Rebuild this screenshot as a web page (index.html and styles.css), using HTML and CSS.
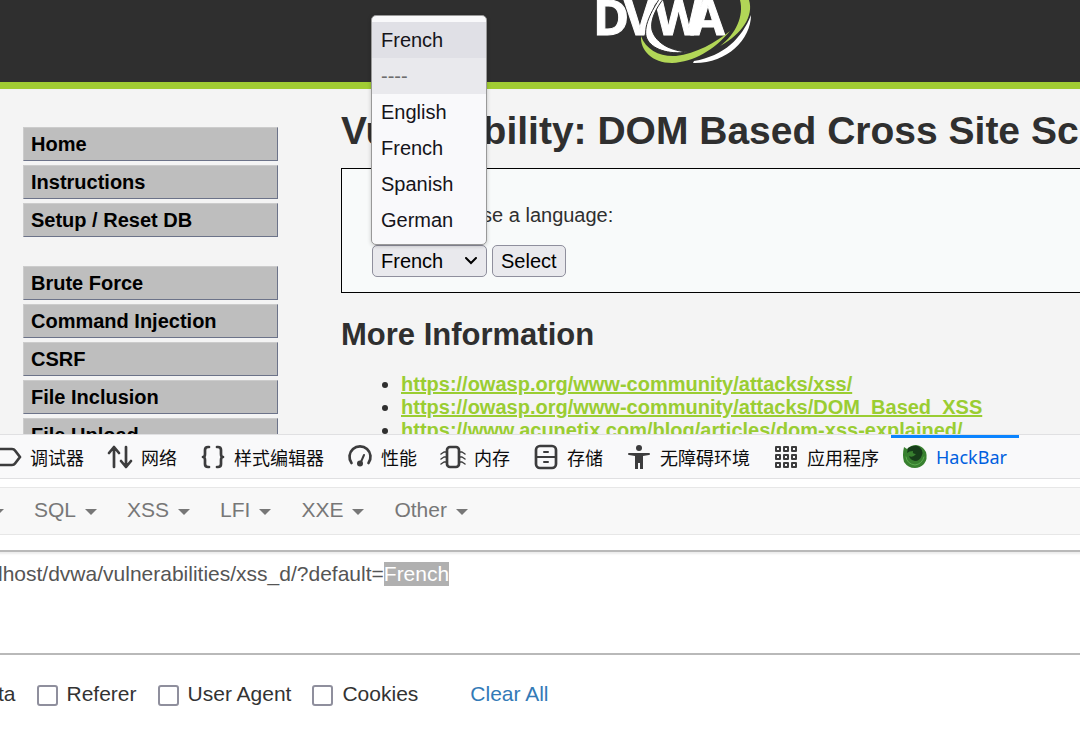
FILE: index.html
```html
<!DOCTYPE html>
<html lang="en">
<head>
    <meta charset="utf-8">
    <title>Vulnerability: DOM Based Cross Site Scripting (XSS)</title>
    <link rel="stylesheet" href="styles.css">
</head>
<body>
    <div class="page">
        <header class="page-header">
            <svg class="logo" viewBox="0 0 170 66" width="170" height="66" role="img" aria-label="DVWA">
                <g class="logo-text">
                    <text x="3" y="35">D</text>
                    <text x="34" y="35">V</text>
                    <text x="65" y="35">W</text>
                    <text x="101" y="35">A</text>
                </g>
                <path fill="#fff" stroke="#2f2f2f" d="M74 -2 C66 8 60 20 62 30 C66 44 82 51 98 52 C78 55 62 49 57 39 C52 28 62 10 70 -2 Z"/>
                <path fill="#b2d657" d="M51 36 C56 50 70 57 86 56 C106 54 126 42 140 31 C124 50 104 62 82 63 C62 63 50 50 51 36 Z"/>
                <path fill="#b2d657" d="M130 46 C146 34 154 16 150 0 L159 0 C164 16 152 34 130 46 Z"/>
                <path fill="#fff" d="M161 15 C161 40 136 64 103 63 L104 61 C134 56 152 38 161 15 Z"/>
            </svg>
        </header>

        <div class="page-body">
            <nav class="menu">
                <ul>
                    <li><a href="#">Home</a></li>
                    <li><a href="#">Instructions</a></li>
                    <li><a href="#">Setup / Reset DB</a></li>
                </ul>
                <ul>
                    <li><a href="#">Brute Force</a></li>
                    <li><a href="#">Command Injection</a></li>
                    <li><a href="#">CSRF</a></li>
                    <li><a href="#">File Inclusion</a></li>
                    <li><a href="#">File Upload</a></li>
                </ul>
            </nav>

            <main class="content">
                <h1>Vulnerability: DOM Based Cross Site Sc</h1>
                <form class="vulnerable">
                    <label for="lang">Please choose a language:</label>
                    <div class="field">
                        <select id="lang">
                            <option>French</option>
                        </select>
                        <button type="button">Select</button>
                        <ul class="dropdown">
                            <li class="current">French</li>
                            <li class="divider">----</li>
                            <li>English</li>
                            <li>French</li>
                            <li>Spanish</li>
                            <li>German</li>
                        </ul>
                    </div>
                </form>

                <h2>More Information</h2>
                <ul class="links">
                    <li><a href="#">https://owasp.org/www-community/attacks/xss/</a></li>
                    <li><a href="#">https://owasp.org/www-community/attacks/DOM_Based_XSS</a></li>
                    <li><a href="#">https://www.acunetix.com/blog/articles/dom-xss-explained/</a></li>
                </ul>
            </main>
        </div>
    </div>

    <div class="devtools">
        <div class="tabs">
            <button class="tab">
                <svg viewBox="0 0 24 24"><path d="M-4 4 H15 Q17 4 18 5.500 L23 12 L18 18.500 Q17 20 15 20 H-4"/></svg>
                调试器
            </button>
            <button class="tab">
                <svg viewBox="0 0 24 24"><path d="M6 22 V2 M1 8 L6 2 L11 8 M18 2 V22 M13 16 L18 22 L23 16"/></svg>
                网络
            </button>
            <button class="tab">
                <svg viewBox="0 0 24 24"><path d="M8 2 H7 Q4 2 4 5 V9 Q4 12 2 12 Q4 12 4 15 V19 Q4 22 7 22 H8 M16 2 H17 Q20 2 20 5 V9 Q20 12 22 12 Q20 12 20 15 V19 Q20 22 17 22 H16"/></svg>
                样式编辑器
            </button>
            <button class="tab">
                <svg viewBox="0 0 24 24"><path d="M3.500 18 A10.500 10.500 0 1 1 20.500 18"/><path class="thin" d="M16 10 L12.500 18"/><circle class="solid" cx="12" cy="18.500" r="3"/></svg>
                性能
            </button>
            <button class="tab">
                <svg viewBox="0 0 24 24"><rect x="6" y="2" width="12" height="20" rx="3"/><path class="fine" d="M6 7 H3 L0 9 M6 12 H3 L0 14 M6 17 H3 L0 19 M18 7 H21 L24 9 M18 12 H21 L24 14 M18 17 H21 L24 19"/></svg>
                内存
            </button>
            <button class="tab">
                <svg viewBox="0 0 24 24"><rect x="2" y="1" width="20" height="22" rx="4"/><path class="thin" d="M2 12 H22 M10 7 H14 M10 17 H14"/></svg>
                存储
            </button>
            <button class="tab">
                <svg viewBox="0 0 24 24"><g class="solid"><circle cx="12" cy="3" r="3"/><path d="M2 8 H22 Q23 8 23 9 Q23 10 22 10 L16 11 V24 H13 V18 H11 V24 H8 V11 L2 10 Q1 10 1 9 Q1 8 2 8 Z"/></g></svg>
                无障碍环境
            </button>
            <button class="tab">
                <svg viewBox="0 0 24 24"><path class="thin" d="M2 2 h4 v4 h-4 Z M10 2 h4 v4 h-4 Z M18 2 h4 v4 h-4 Z M2 10 h4 v4 h-4 Z M10 10 h4 v4 h-4 Z M18 10 h4 v4 h-4 Z M2 18 h4 v4 h-4 Z M10 18 h4 v4 h-4 Z M18 18 h4 v4 h-4 Z"/></svg>
                应用程序
            </button>
            <button class="tab active">
                <svg viewBox="0 0 24 24"><path fill="#38802f" stroke="none" d="M1 2 L4 4 Q8 0 13 0 Q20 1 23 7 Q25 14 21 19 Q17 23 12 23 Q5 23 1 17 Q-1 10 1 2 Z"/><path fill="#173d1a" stroke="none" d="M5 3 Q10 0 15 1 Q21 5 19 10 Q17 16 12 16 Q7 15 6 11 Q10 13 13 9 Q9 9 10 6 Q6 6 4 8 Z"/><path fill="none" stroke="#5cab4f" stroke-width="1" d="M3 12 Q4 19 12 20 Q19 19 21 12"/></svg>
                HackBar
            </button>
        </div>

        <div class="hackbar-menu">
            <button class="caret-only" aria-label="More"><i class="caret"></i></button>
            <button>SQL <i class="caret"></i></button>
            <button>XSS <i class="caret"></i></button>
            <button>LFI <i class="caret"></i></button>
            <button>XXE <i class="caret"></i></button>
            <button>Other <i class="caret"></i></button>
        </div>

        <textarea id="url" class="url-field" aria-label="URL" spellcheck="false">lhost/dvwa/vulnerabilities/xss_d/?default=French</textarea>

        <div class="options">
            <span>ta</span>
            <label><input type="checkbox"> Referer</label>
            <label><input type="checkbox"> User Agent</label>
            <label><input type="checkbox"> Cookies</label>
            <a href="#">Clear All</a>
        </div>
    </div>

    <script>
        const url = document.getElementById('url');
        url.focus();
        url.setSelectionRange(url.value.indexOf('=') + 1, url.value.length);
    </script>
</body>
</html>
```
FILE: styles.css
```css
* {
    box-sizing: border-box;
}

body {
    margin: 0;
    height: 100vh;
    display: flex;
    flex-direction: column;
    overflow: hidden;
    font-family: "Liberation Sans", Arial, sans-serif;
    background: #fff;
}

ul {
    list-style: none;
    margin: 0;
    padding: 0;
}

button,
select,
textarea {
    font-family: inherit;
}

/* DVWA page */
.page {
    flex: 1;
    min-height: 0;
    overflow: hidden;
    background: #f4f4f4;
    color: #2f2f2f;
    font-size: 20px;
}

.page-header {
    height: 89px;
    padding-left: 270px;
    background: #2f2f2f;
    border-bottom: 7px solid #a1cc33;
    display: flex;
    justify-content: center;
}

.logo {
    display: block;
    overflow: visible;
}

.logo-text {
    font-family: "Open Sans", sans-serif;
    font-size: 49px;
    font-weight: bold;
    fill: #fff;
    stroke: #fff;
}

.page-body {
    display: flex;
    gap: 63px;
    padding-left: 23px;
}

.menu {
    flex: 0 0 255px;
    display: flex;
    flex-direction: column;
    gap: 29px;
    padding-top: 38px;
}

.menu ul {
    display: flex;
    flex-direction: column;
    gap: 4px;
}

.menu a {
    display: block;
    height: 34px;
    padding-left: 7px;
    line-height: 32px;
    font-weight: bold;
    color: #000;
    background: #bebebe;
    border: 1px solid #ccc;
    border-right-color: #6c7389;
    border-bottom-color: #6c7389;
    text-decoration: none;
}

.content {
    flex: 1;
    min-width: 0;
}

h1 {
    margin: 18px 0 14px;
    font-size: 39px;
    line-height: 47px;
    white-space: nowrap;
}

.vulnerable {
    height: 125px;
    padding: 34px 30px 0;
    background: #f8fafa;
    border: 1px solid #000;
    border-right: 0;
}

.vulnerable label {
    display: block;
    line-height: 24px;
}

.field {
    position: relative;
    display: flex;
    gap: 5px;
    margin-top: 18px;
}

.field select,
.field button {
    height: 32px;
    font-size: 20px;
    color: #000;
    background-color: #e9e9ed;
    border: 1px solid #8f8f9d;
    border-radius: 5px;
}

.field select {
    appearance: none;
    width: 115px;
    padding: 0 8px;
    background-image: url("data:image/svg+xml,%3Csvg xmlns='http://www.w3.org/2000/svg' width='12' height='8' fill='none' stroke='black' stroke-width='2' stroke-linecap='round'%3E%3Cpath d='M1 1l5 5 5-5'/%3E%3C/svg%3E");
    background-repeat: no-repeat;
    background-position: right 9px center;
}

.field button {
    padding: 0 8px;
}

.dropdown {
    position: absolute;
    left: -1px;
    bottom: 32px;
    width: 116px;
    padding: 6px 0;
    color: #15141a;
    background: #f9f9fb;
    border: 1px solid #999;
    border-radius: 5px;
    box-shadow: 0 1px 4px rgba(0, 0, 0, 0.2);
}

.dropdown li {
    padding-left: 9px;
    line-height: 36px;
}

.dropdown .current {
    background: #e0e0e6;
}

.dropdown .divider {
    color: #6d6d6d;
    background: #e9e9ed;
}

h2 {
    margin: 23px 0 20px;
    font-size: 31px;
    line-height: 37px;
}

.links {
    list-style: disc;
    padding-left: 60px;
}

.links li {
    line-height: 23px;
}

.links a {
    color: #9acd32;
    font-weight: bold;
}

/* Developer tools */
.tabs {
    display: flex;
    height: 45px;
    background: #f9f9fa;
    border-top: 1px solid #e0e0e2;
    border-bottom: 1px solid #e0e0e2;
}

.tab {
    display: flex;
    align-items: center;
    gap: 9px;
    padding: 0 12px 3px;
    border: 0;
    border-top: 3px solid transparent;
    background: none;
    color: #0c0c0d;
    font-family: "Noto Sans", "Noto Sans CJK SC", sans-serif;
    font-size: 18px;
    white-space: nowrap;
}

.tab:first-child {
    margin-left: -3px;
    padding-left: 0;
}

.tab svg {
    width: 24px;
    height: 24px;
    overflow: visible;
    fill: none;
    stroke: #3c3c3d;
    stroke-width: 2.7;
    stroke-linecap: round;
    stroke-linejoin: round;
}

.tab .thin {
    stroke-width: 2;
}

.tab .fine {
    stroke-width: 1.5;
}

.tab .solid {
    fill: #3c3c3d;
    stroke: none;
}

.tab.active {
    color: #0060df;
    border-top-color: #0a84ff;
}

.hackbar-menu {
    display: flex;
    gap: 30px;
    height: 48px;
    margin-top: 8px;
    background: #f8f8f8;
    border-top: 1px solid #e7e7e7;
    border-bottom: 1px solid #e7e7e7;
}

.hackbar-menu button {
    display: flex;
    align-items: center;
    gap: 9px;
    padding: 0 0 3px;
    border: 0;
    background: none;
    color: #777;
    font-size: 21px;
}

.caret {
    margin-top: 5px;
    border-top: 6px solid;
    border-left: 6px solid transparent;
    border-right: 6px solid transparent;
}

.hackbar-menu .caret-only {
    width: 4px;
    justify-content: flex-end;
}

.url-field {
    display: block;
    width: 100%;
    height: 105px;
    margin-top: 15px;
    padding: 10px 0;
    border: 0;
    border-top: 2px solid #b9b9b9;
    border-bottom: 2px solid #b9b9b9;
    outline: 0;
    resize: none;
    box-shadow: inset 0 4px 2px -2px rgba(0, 0, 0, 0.08);
    color: #555;
    font-size: 21px;
    line-height: 24px;
    text-indent: -2px;
}

.url-field::selection {
    color: #fff;
    background: #b0b0b0;
}

.options {
    display: flex;
    align-items: center;
    gap: 21px;
    height: 89px;
    margin-left: -2px;
    padding-bottom: 11px;
    color: #333;
    font-size: 21px;
}

.options label {
    display: flex;
    align-items: center;
    gap: 9px;
}

.options input {
    appearance: none;
    width: 21px;
    height: 21px;
    margin: 3px 0 0;
    background: #fff;
    border: 2px solid #8f8f9d;
    border-radius: 3px;
}

.options a {
    margin-left: 31px;
    color: #337ab7;
    text-decoration: none;
}
```
